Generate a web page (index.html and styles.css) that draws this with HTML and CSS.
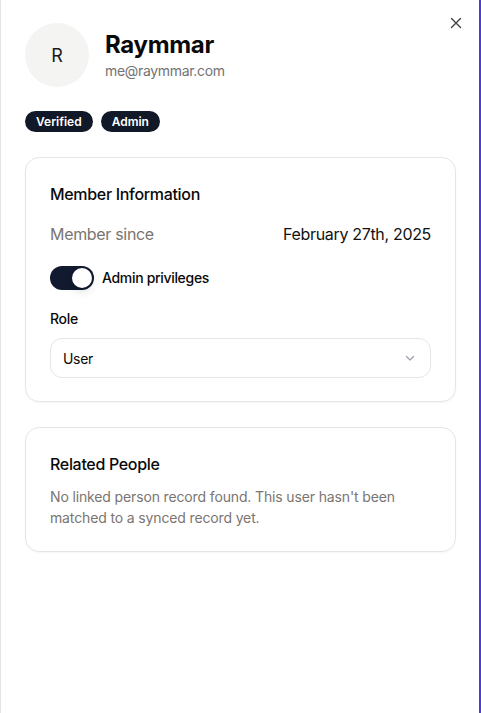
FILE: index.html
```html
<!DOCTYPE html>
<html lang="en">
<head>
<meta charset="utf-8">
<title>Raymmar</title>
<link rel="stylesheet" href="styles.css">
</head>
<body>
<aside class="panel">
  <button class="close" aria-label="Close">
    <svg width="12" height="12" viewBox="0 0 12 12"><path d="M1.5 1.5l9 9M10.5 1.5l-9 9" stroke="#3f3f46" stroke-width="1.4" stroke-linecap="round"/></svg>
  </button>
  <header class="head">
    <div class="avatar">R</div>
    <div class="ident">
      <h1 class="name">Raymmar</h1>
      <div class="email">me@raymmar.com</div>
    </div>
  </header>
  <div class="badges">
    <span class="badge">Verified</span>
    <span class="badge">Admin</span>
  </div>
  <section class="card">
    <h2 class="card-title">Member Information</h2>
    <div class="row">
      <span class="muted">Member since</span>
      <span class="value">February 27th, 2025</span>
    </div>
    <label class="toggle-row">
      <span class="toggle"><span class="knob"></span></span>
      <span class="toggle-label">Admin privileges</span>
    </label>
    <div class="field-label">Role</div>
    <div class="select">
      <span>User</span>
      <svg width="12" height="12" viewBox="0 0 12 12"><path d="M2.5 4.5l3.5 3.5 3.5-3.5" fill="none" stroke="#9ca3af" stroke-width="1.3" stroke-linecap="round" stroke-linejoin="round"/></svg>
    </div>
  </section>
  <section class="card card2">
    <h2 class="card-title">Related People</h2>
    <p class="desc">No linked person record found. This user hasn't been matched to a synced record yet.</p>
  </section>
</aside>
</body>
</html>
```
FILE: styles.css
```css
* { box-sizing: border-box; }
html, body { margin: 0; height: 100%; background: #fff; }
body { font-family: Inter, "Noto Sans", sans-serif; color: #0a0a0a; letter-spacing: -0.02em; }
.panel {
  position: relative;
  height: 713px;
  width: 481px;
  border-left: 1px solid #e4e4e7;
  border-right: 2px solid #4f3bd8;
  padding: 23px 23px 0 24px;
  display: flex;
  flex-direction: column;
}
.close {
  position: absolute;
  top: 16px;
  right: 16px;
  width: 14px; height: 14px;
  padding: 0; border: 0; background: none;
  display: flex; align-items: center; justify-content: center;
}
.head { display: flex; align-items: flex-start; gap: 16px; }
.avatar {
  width: 64px; height: 64px; border-radius: 50%;
  background: #f4f4f3;
  display: flex; align-items: center; justify-content: center;
  font-size: 18px; color: #1a1a1a; letter-spacing: 0;
}
.ident { padding-top: 7px; }
.name { margin: 0; font-size: 24px; font-weight: 700; line-height: 30px; }
.email { font-size: 14px; color: #737373; line-height: 20px; margin-top: 1px; }
.badges { display: flex; gap: 8px; margin-top: 24px; }
.badge {
  background: #111827; color: #fff;
  font-size: 12px; font-weight: 600; line-height: 21px;
  padding: 0 11px; border-radius: 11px; letter-spacing: 0;
}
.card {
  margin-top: 25px;
  border: 1px solid #e5e5e5;
  border-radius: 14px;
  padding: 24px 24px 23px 24px;
  box-shadow: 0 1px 2px rgba(0,0,0,0.04);
}
.card-title { margin: 0; font-size: 16px; font-weight: 500; line-height: 24px; }
.row { display: flex; justify-content: space-between; margin-top: 16px; font-size: 16px; line-height: 24px; }
.muted { color: #7a7570; }
.value { color: #111; }
.toggle-row { display: flex; align-items: center; gap: 8px; margin-top: 20px; }
.toggle {
  width: 44px; height: 24px; border-radius: 12px;
  background: #111a2e; position: relative; display: block;
}
.knob {
  position: absolute; top: 2px; right: 2px;
  width: 20px; height: 20px; border-radius: 50%;
  background: #fff;
  box-shadow: 0 4px 10px rgba(0,0,0,0.12);
}
.toggle-label { font-size: 14px; font-weight: 500; line-height: 20px; }
.field-label { margin-top: 19px; font-size: 14px; font-weight: 500; line-height: 20px; }
.select {
  margin-top: 9px; height: 40px;
  border: 1px solid #e5e5e5; border-radius: 12px;
  display: flex; align-items: center; justify-content: space-between;
  padding: 0 14px 0 12px;
  font-size: 14px;
}
.card2 { padding-bottom: 23px; }
.desc { margin: 10px 0 0; font-size: 14px; line-height: 21px; color: #7a7570; letter-spacing: -0.01em; }
```
